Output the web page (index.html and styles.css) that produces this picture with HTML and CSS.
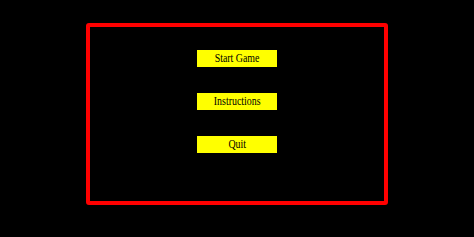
FILE: index.html
```html
<!DOCTYPE html>
<html lang="en">
<head>
    <meta charset="UTF-8">
    <title>Menu</title>
    <link rel="stylesheet" href="styles.css">
</head>
<body>
    <div class="menu-box">
        <button class="menu-btn"><span class="btn-label">Start Game</span></button>
        <button class="menu-btn"><span class="btn-label">Instructions</span></button>
        <button class="menu-btn"><span class="btn-label">Quit</span></button>
    </div>
</body>
</html>
```

FILE: styles.css
```css
body {
    margin: 0;
    background-color: #000;
    font-family: "Liberation Serif", serif;
}

.menu-box {
    box-sizing: border-box;
    width: 302px;
    height: 182px;
    margin: 23px auto 0;
    border: 4px solid #f00;
    border-radius: 3px;
    padding-top: 23px;
    display: flex;
    flex-direction: column;
    align-items: center;
    gap: 26px;
}

.menu-btn {
    width: 80px;
    height: 17px;
    padding: 0;
    border: none;
    background-color: #ff0;
    color: #000;
    font-family: "Liberation Serif", serif;
    font-size: 11.5px;
    line-height: 17px;
}

/* glyphs in the original look slightly condensed */
.btn-label {
    display: inline-block;
    transform: scaleX(0.86);
}
```
